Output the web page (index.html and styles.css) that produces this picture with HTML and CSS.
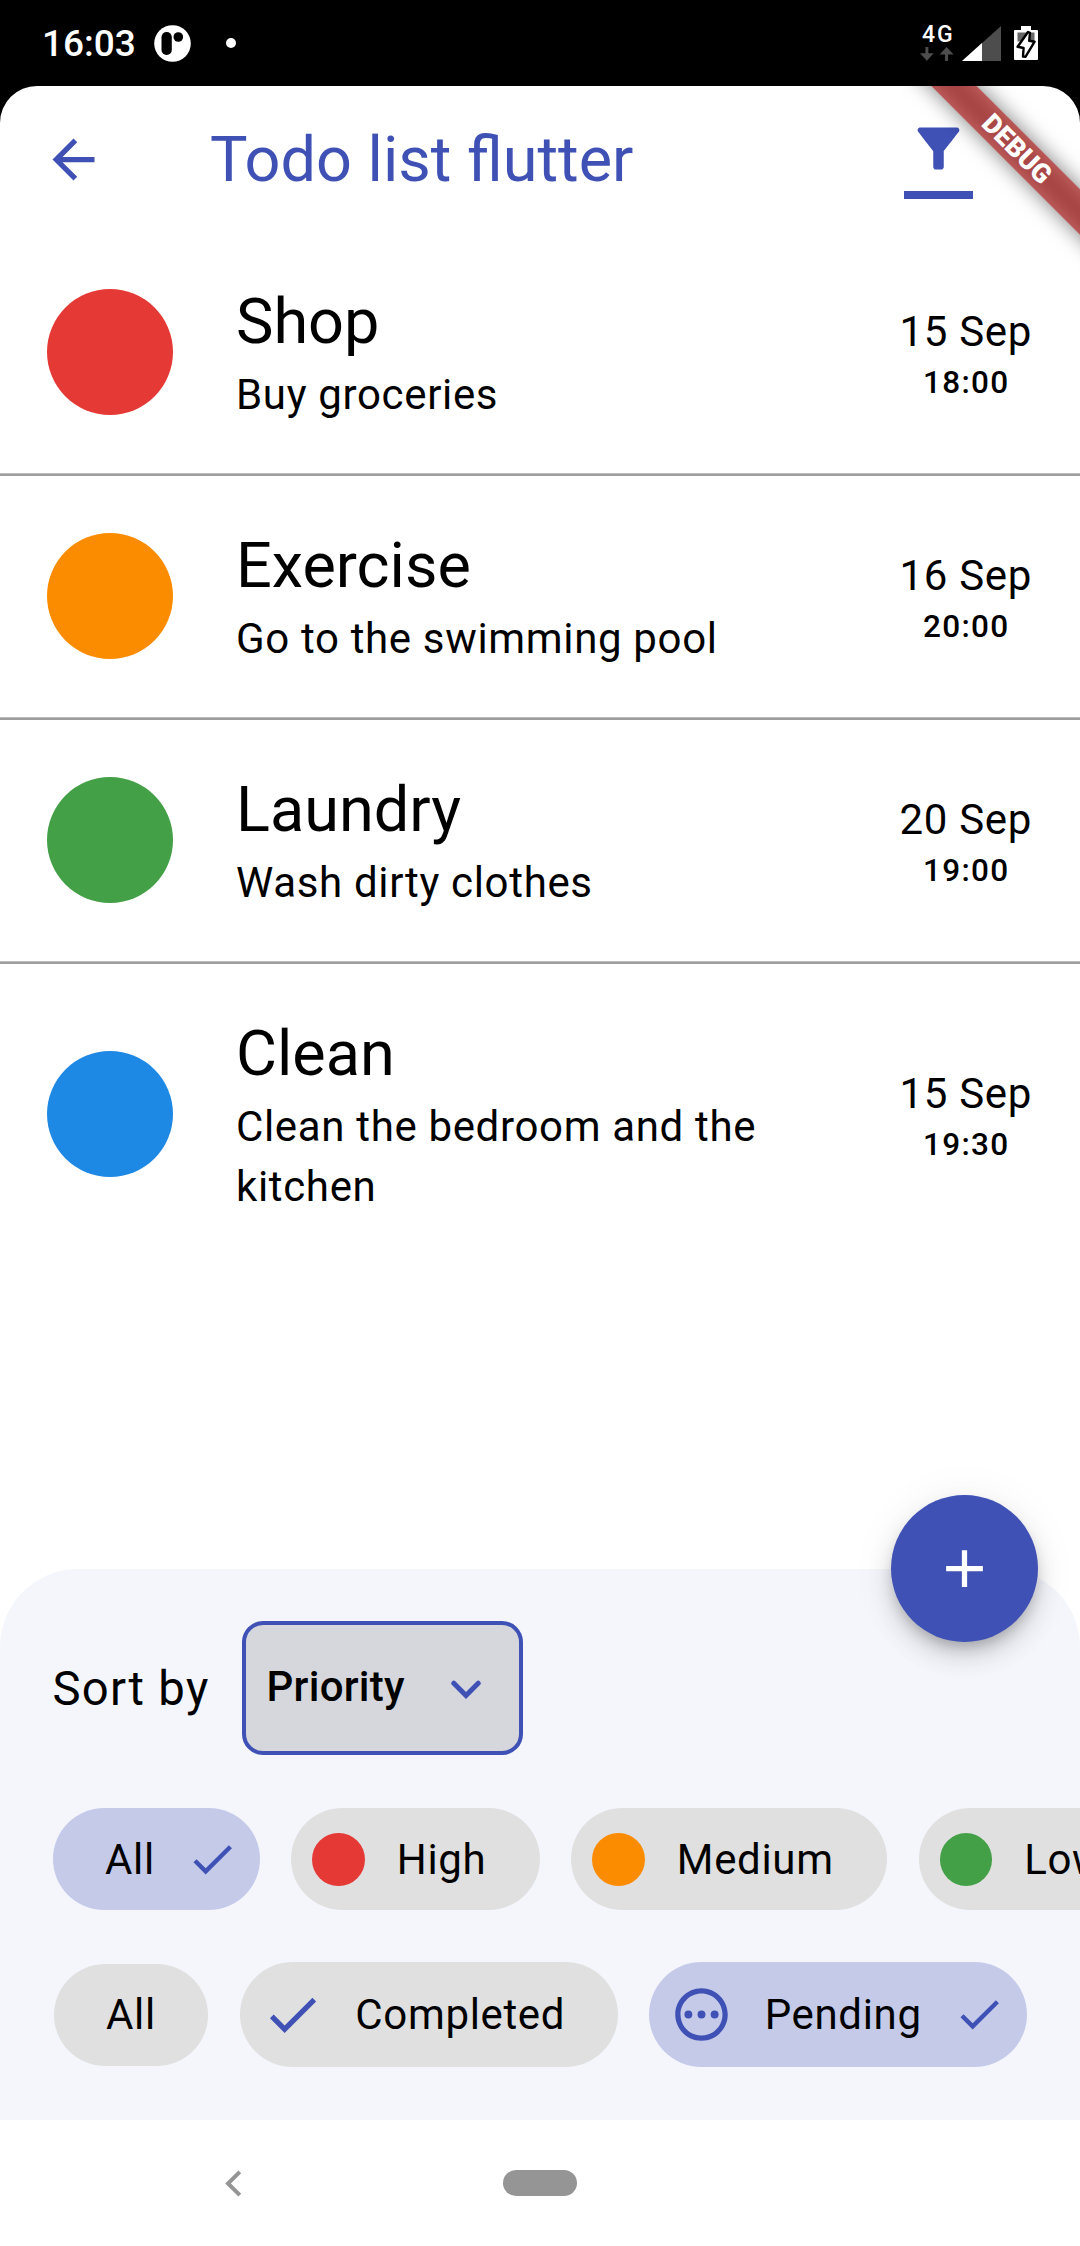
FILE: index.html
```html
<!DOCTYPE html>
<html lang="en">
<head>
<meta charset="utf-8">
<title>Todo list flutter</title>
<link rel="stylesheet" href="styles.css">
</head>
<body>
<div class="phone">
  <div class="status">
    <span class="clock">16:03</span>
    <svg class="status-app" width="37" height="37" viewBox="0 0 37 37"><circle cx="18.500" cy="18.500" r="18.300" fill="#fff"/><rect x="7.500" y="7" width="10.300" height="23" rx="5.100" fill="#000"/><circle cx="24.300" cy="12" r="4.800" fill="#000"/></svg>
    <span class="status-dot"></span>
    <span class="network">
      <span class="network-type">4G</span>
      <svg width="34" height="14" viewBox="0 0 34 14" fill="#4d4d4d"><path d="M5.400 0h3v6.200h5.300L6.900 13.800 0 6.200h5.400zM25.100 14h3V7.400h5.500L26.600 0l-7 7.400h5.500z"/></svg>
    </span>
    <svg class="signal" width="39" height="35" viewBox="0 0 39 35"><path d="M39 0v35H0z" fill="#4d4d4d"/><path d="M20 17v18H0z" fill="#fff"/></svg>
    <svg class="battery" width="24" height="34" viewBox="0 0 24 34"><path d="M7 0h10v4h6q1 0 1 1v28q0 1-1 1H1q-1 0-1-1V5q0-1 1-1h6z" fill="#fff"/><path d="M3.500 6.500h17v9h-17z" fill="#666"/><path d="M14 6l2 .8-.8 8 5.400.9-9 15-2.600-.2.600-8.500-6-1.200z" fill="#fff" stroke="#000" stroke-width="2.400" stroke-linejoin="round"/></svg>
  </div>

  <div class="app">
    <header class="appbar">
      <svg class="back" width="63" height="63" viewBox="0 0 24 24"><path d="M20 11H7.830l5.590-5.590L12 4l-8 8 8 8 1.410-1.410L7.830 13H20v-2z"/></svg>
      <h1 class="appbar-title">Todo list flutter</h1>
      <div class="filter">
        <svg width="63" height="63" viewBox="0 0 24 24"><path d="M4.250 5.610C6.270 8.200 10 13 10 13v6c0 .55.45 1 1 1h2c.55 0 1-.45 1-1v-6s3.720-4.800 5.740-7.390A.998.998 0 0 0 18.950 4H5.040c-.83 0-1.300.95-.79 1.610z"/></svg>
      </div>
    </header>

    <main class="list">
      <div class="task">
        <span class="mark red"></span>
        <div class="task-text"><div class="task-title">Shop</div><div class="task-note">Buy groceries</div></div>
        <div class="due"><div class="due-date">15 Sep</div><div class="due-time">18:00</div></div>
      </div>
      <div class="rule"></div>
      <div class="task">
        <span class="mark orange"></span>
        <div class="task-text"><div class="task-title">Exercise</div><div class="task-note">Go to the swimming pool</div></div>
        <div class="due"><div class="due-date">16 Sep</div><div class="due-time">20:00</div></div>
      </div>
      <div class="rule"></div>
      <div class="task">
        <span class="mark green"></span>
        <div class="task-text"><div class="task-title">Laundry</div><div class="task-note">Wash dirty clothes</div></div>
        <div class="due"><div class="due-date">20 Sep</div><div class="due-time">19:00</div></div>
      </div>
      <div class="rule"></div>
      <div class="task">
        <span class="mark blue"></span>
        <div class="task-text"><div class="task-title">Clean</div><div class="task-note">Clean the bedroom and the kitchen</div></div>
        <div class="due"><div class="due-date">15 Sep</div><div class="due-time">19:30</div></div>
      </div>
    </main>

    <section class="sheet">
      <div class="sort">
        <span class="sort-label">Sort by</span>
        <div class="select">
          <span>Priority</span>
          <svg width="30" height="19" viewBox="0 0 30 19"><path d="M2.800 3.200L15 15.500 27.200 3.200" fill="none" stroke="#3f51b5" stroke-width="5" stroke-linecap="round"/></svg>
        </div>
      </div>
      <div class="chips">
        <div class="chip selected"><span>All</span><svg class="tick" width="52.500" height="52.500" viewBox="0 0 24 24"><path d="M9 16.170L4.830 12l-1.420 1.410L9 19 21 7l-1.410-1.410z"/></svg></div>
        <div class="chip lead level"><i class="dot red"></i><span>High</span></div>
        <div class="chip lead level"><i class="dot orange"></i><span>Medium</span></div>
        <div class="chip lead level"><i class="dot green"></i><span>Low</span></div>
      </div>
      <div class="chips status-chips">
        <div class="chip"><span>All</span></div>
        <div class="chip lead tall"><svg width="63" height="63" viewBox="0 0 24 24"><path d="M9 16.170L4.830 12l-1.420 1.410L9 19 21 7l-1.410-1.410z"/></svg><span>Completed</span></div>
        <div class="chip lead tall selected"><svg width="63" height="63" viewBox="0 0 24 24"><path d="M12 2C6.480 2 2 6.480 2 12s4.480 10 10 10 10-4.480 10-10S17.520 2 12 2zm0 18c-4.420 0-8-3.580-8-8s3.580-8 8-8 8 3.580 8 8-3.580 8-8 8z"/><circle cx="7" cy="12" r="1.500"/><circle cx="12" cy="12" r="1.500"/><circle cx="17" cy="12" r="1.500"/></svg><span>Pending</span><svg class="tick" width="52.500" height="52.500" viewBox="0 0 24 24"><path d="M9 16.170L4.830 12l-1.420 1.410L9 19 21 7l-1.410-1.410z"/></svg></div>
      </div>
      <div class="fab"><svg width="63" height="63" viewBox="0 0 24 24"><path d="M19 13h-6v6h-2v-6H5v-2h6V5h2v6h6v2z"/></svg></div>
    </section>

    <div class="banner">DEBUG</div>
  </div>

  <nav class="navbar">
    <svg width="17" height="27" viewBox="0 0 17 27"><path d="M14.800 1.800L3 13.500l11.800 11.700" fill="none" stroke="#959595" stroke-width="4"/></svg>
    <span class="home"></span>
  </nav>
</div>
</body>
</html>
```
FILE: styles.css
```css
* { box-sizing: border-box; }
body {
  margin: 0;
  background: #000;
  font-family: Roboto, "Liberation Sans", sans-serif;
  color: #000;
}
.phone {
  width: 1080px;
  height: 2246px;
  display: flex;
  flex-direction: column;
  overflow: hidden;
}
svg { display: block; flex: none; }

/* status bar */
.status {
  height: 86px;
  flex: none;
  display: flex;
  align-items: center;
  padding: 0 42px;
  color: #fff;
}
.clock { font-size: 37px; font-weight: 500; width: 112px; line-height: 44px; padding-top: 2px; }
.status-dot { width: 10px; height: 10px; border-radius: 50%; background: #fff; margin-left: 35px; }
.network { margin-left: auto; width: 34px; margin-right: 8px; display: flex; flex-direction: column; }
.network-type { font-size: 23px; font-weight: 500; line-height: 20px; height: 22px; letter-spacing: 2px; padding-left: 2px; white-space: nowrap; }
.signal { margin-right: 13px; }

/* app surface */
.app {
  position: relative;
  height: 2034px;
  flex: none;
  display: flex;
  flex-direction: column;
  background: #fff;
  border-radius: 37px 37px 0 0;
  overflow: hidden;
}
.appbar {
  height: 146px;
  flex: none;
  display: flex;
  align-items: center;
  padding: 0 107px 0 42px;
}
.appbar svg { fill: #3f51b5; }
.appbar-title {
  margin: 2px 0 0 105px;
  flex: 1;
  font-size: 63px;
  font-weight: 400;
  line-height: 74px;
  color: #3f51b5;
}
.filter {
  width: 69px;
  height: 82px;
  margin-bottom: 2px;
  border-bottom: 8px solid #3f51b5;
  display: flex;
  justify-content: center;
}

/* tasks */
.list { flex: 1; }
.task {
  display: flex;
  align-items: center;
  min-height: 241px;
  padding: 49px 48px 48px 47px;
}
.mark { width: 126px; height: 126px; margin-bottom: 2px; border-radius: 50%; flex: none; }
.red { background: #e53935; }
.orange { background: #fb8c00; }
.green { background: #43a047; }
.blue { background: #1e88e5; }
.task-text { width: 560px; margin-left: 63px; padding-top: 4px; }
.task-title { font-size: 63px; line-height: 74px; margin-bottom: 6px; }
.task-note { font-size: 42px; line-height: 60px; letter-spacing: .66px; }
.due { margin-left: auto; text-align: center; white-space: nowrap; }
.due-date { font-size: 42px; line-height: 60px; letter-spacing: .66px; }
.due-time { font-size: 31.5px; font-weight: 500; line-height: 42px; letter-spacing: 1.3px; padding-left: 1px; }
.rule { height: 3px; background: linear-gradient(#bbb 1px, #9e9e9e 1px); }

/* filter sheet */
.sheet {
  position: relative;
  height: 551px;
  flex: none;
  padding: 52px 0 0 52.5px;
  background: #f4f6fc;
  border-radius: 78px 78px 0 0;
}
.sort { display: flex; align-items: center; height: 134px; }
.sort-label { font-size: 47.25px; letter-spacing: 1.3px; width: 189px; padding-top: 2px; white-space: nowrap; }
.select {
  width: 281px;
  height: 134px;
  display: flex;
  align-items: center;
  justify-content: space-between;
  padding: 0 38px 0 21px;
  border: 4px solid #3f51b5;
  border-radius: 21px;
  background: #d6d7dc;
  font-size: 42px;
  font-weight: 500;
  letter-spacing: .26px;
}
.select span { margin-top: -3px; }
.select svg { margin-top: 3px; }
.chips {
  display: flex;
  align-items: center;
  gap: 31.5px;
  margin-top: 53px;
}
.chip {
  height: 102px;
  flex: none;
  display: flex;
  align-items: center;
  gap: 31.5px;
  padding: 0 52.5px;
  border-radius: 53px;
  background: #e0e0e0;
  font-size: 42px;
  letter-spacing: .66px;
}
.chip svg { fill: #3f51b5; }
.lead { padding-left: 21px; }
.level { gap: 32px; padding-right: 53.5px; }
.tall { height: 105px; }
.selected { background: #c5cae9; padding-right: 21px; }
.dot { width: 52.5px; height: 53px; border-radius: 50%; }
.status-chips { margin: 52px 0 0 1px; }
.fab {
  position: absolute;
  top: -74px;
  right: 42px;
  width: 147px;
  height: 147px;
  border-radius: 50%;
  display: flex;
  align-items: center;
  justify-content: center;
  background: #3f51b5;
  box-shadow: 0 8px 13px -3px rgba(0,0,0,.2), 0 14px 26px rgba(0,0,0,.14), 0 3px 47px rgba(0,0,0,.06);
}
.fab svg { fill: #fff; }

/* corner ribbon */
.banner {
  position: absolute;
  top: 47px;
  right: -77px;
  width: 280px;
  height: 32px;
  transform: rotate(45deg);
  color: #fff;
  font-size: 26.8px;
  font-weight: 900;
  line-height: 32px;
  text-align: center;
}
.banner::before,
.banner::after {
  content: "";
  position: absolute;
  inset: 0;
}
.banner::before {
  z-index: -2;
  background: rgba(0,0,0,.5);
  filter: blur(10.4px);
}
.banner::after {
  z-index: -1;
  background: rgba(183,28,28,.63);
}

/* system navigation */
.navbar {
  flex: 1;
  display: flex;
  align-items: center;
  padding: 0 0 0 225px;
  background: #fff;
}
.home { width: 74px; height: 26px; border-radius: 13px; background: #959595; margin-left: 261px; }
```
